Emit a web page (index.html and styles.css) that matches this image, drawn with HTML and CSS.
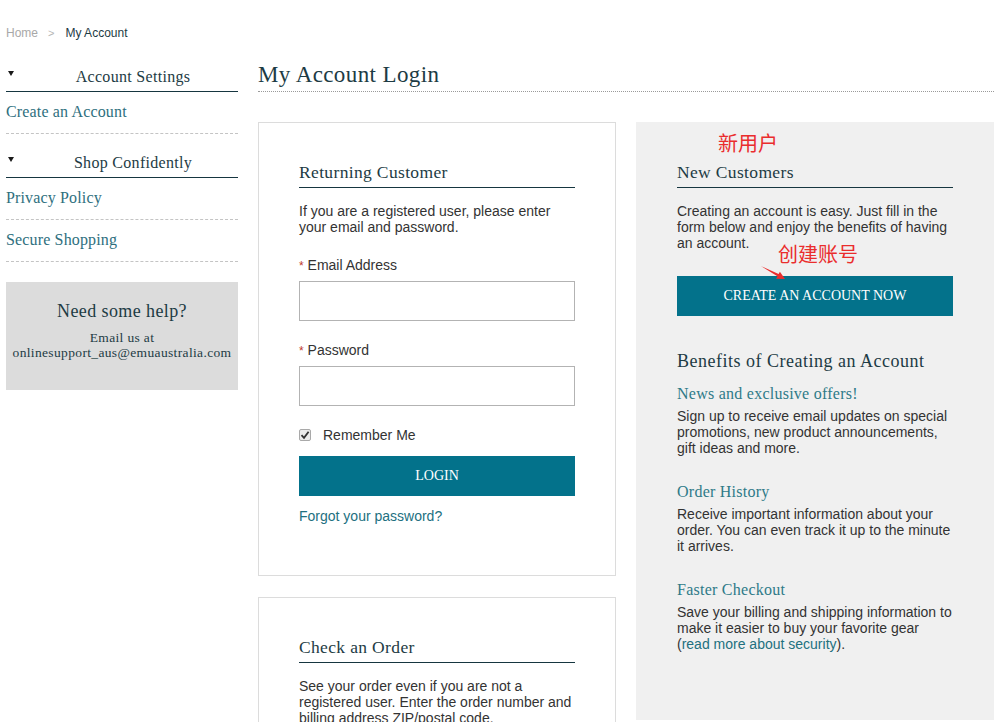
FILE: index.html
```html
<!DOCTYPE html>
<html lang="en">
<head>
<meta charset="utf-8">
<title>My Account Login</title>
<link rel="stylesheet" href="styles.css">
</head>
<body>
<div class="page">
  <nav class="breadcrumb">
    <a class="crumb-home" href="#">Home</a>
    <span class="crumb-sep">&gt;</span>
    <span class="crumb-current">My Account</span>
  </nav>

  <div class="layout">
    <aside class="sidebar">
      <div class="side-head"><span class="tri"></span><span class="side-title">Account Settings</span></div>
      <a class="side-link" href="#">Create an Account</a>
      <div class="side-head second"><span class="tri"></span><span class="side-title">Shop Confidently</span></div>
      <a class="side-link" href="#">Privacy Policy</a>
      <a class="side-link" href="#">Secure Shopping</a>

      <div class="help">
        <div class="help-title">Need some help?</div>
        <div class="help-text">Email us at<br>onlinesupport_aus@emuaustralia.com</div>
      </div>
    </aside>

    <main class="main">
      <h1 class="page-title">My Account Login</h1>

      <div class="columns">
        <div class="left-col">
          <section class="card">
            <h2 class="card-title">Returning Customer</h2>
            <p class="text first">If you are a registered user, please enter your email and password.</p>
            <label class="field-label"><span class="req">*</span> Email Address</label>
            <div class="input"></div>
            <label class="field-label"><span class="req">*</span> Password</label>
            <div class="input"></div>
            <div class="remember">
              <span class="check">
                <svg width="10" height="10" viewBox="0 0 10 10"><path d="M1.5 5.2 L4 7.8 L8.6 1.8" fill="none" stroke="#333" stroke-width="1.8"/></svg>
              </span>
              <span>Remember Me</span>
            </div>
            <div class="btn login">LOGIN</div>
            <a class="forgot" href="#">Forgot your password?</a>
          </section>

          <section class="card order">
            <h2 class="card-title">Check an Order</h2>
            <p class="text first">See your order even if you are not a registered user. Enter the order number and billing address ZIP/postal code.</p>
          </section>
        </div>

        <section class="newbox">
          <span class="note note-new">新用户</span>
          <span class="note note-create">创建账号</span>
          <svg class="note-arrow" width="30" height="20" viewBox="0 0 30 20"><polygon points="3,4 20.6,12.1 21.9,9.7 27,17 18.1,16.7 19.4,14.3" fill="#ea2d2d"/></svg>

          <h2 class="card-title">New Customers</h2>
          <p class="text first">Creating an account is easy. Just fill in the form below and enjoy the benefits of having an account.</p>
          <div class="btn create">CREATE AN ACCOUNT NOW</div>

          <h3 class="benefits">Benefits of Creating an Account</h3>
          <h4 class="benefit-title">News and exclusive offers!</h4>
          <p class="text small-gap">Sign up to receive email updates on special promotions, new product announcements, gift ideas and more.</p>
          <h4 class="benefit-title">Order History</h4>
          <p class="text small-gap">Receive important information about your order. You can even track it up to the minute it arrives.</p>
          <h4 class="benefit-title">Faster Checkout</h4>
          <p class="text small-gap">Save your billing and shipping information to make it easier to buy your favorite gear (<a class="inline-link" href="#">read more about security</a>).</p>
        </section>
      </div>
    </main>
  </div>
</div>
</body>
</html>
```

FILE: styles.css
```css
* { box-sizing: border-box; }
html, body { margin: 0; padding: 0; background: #fff; }
body {
  font-family: "Liberation Sans", Arial, sans-serif;
  color: #333;
  overflow: hidden;
}
a { text-decoration: none; }

.page { padding-left: 6px; width: 994px; }

/* breadcrumb */
.breadcrumb {
  padding-top: 26px;
  font-size: 12px;
  line-height: 14px;
  display: flex;
  align-items: center;
}
.crumb-home { color: #a8a8a8; }
.crumb-sep { color: #b5b5b5; margin: 0 11px 0 10px; font-size: 11px; }
.crumb-current { color: #1d3b44; }

.layout {
  display: flex;
  gap: 20px;
  margin-top: 20px;
}

/* sidebar */
.sidebar { width: 232px; flex: none; display: flex; flex-direction: column; }
.side-head {
  display: flex;
  align-items: center;
  padding: 7px 0 5px;
  border-bottom: 1px solid #163640;
  font-family: "Liberation Serif", "Times New Roman", serif;
  font-size: 16px;
  letter-spacing: 0.3px;
  line-height: 19px;
  color: #1d3b44;
}
.side-head.second { margin-top: 12px; }
.tri {
  width: 22px;
  flex: none;
  height: 5px;
}
.tri::before {
  content: "";
  display: block;
  margin-left: 2px;
  margin-top: -3px;
  width: 0; height: 0;
  border-left: 3.5px solid transparent;
  border-right: 3.5px solid transparent;
  border-top: 5px solid #1a1a1a;
}
.side-title { flex: 1; text-align: center; }
.side-link {
  display: block;
  padding: 10px 0 12px;
  line-height: 19px;
  border-bottom: 1px dashed #c4c4c4;
  font-family: "Liberation Serif", "Times New Roman", serif;
  font-size: 16px;
  letter-spacing: 0.15px;
  color: #2e6f7e;
}

.help {
  margin-top: 20px;
  background: #dcdcdc;
  height: 108px;
  padding-top: 18px;
  text-align: center;
  font-family: "Liberation Serif", "Times New Roman", serif;
  color: #1d3b44;
}
.help-title { font-size: 18px; line-height: 22px; letter-spacing: 0.4px; }
.help-text { margin-top: 8px; font-size: 13.5px; line-height: 15px; letter-spacing: 0.35px; }

/* main */
.main { width: 736px; flex: none; }
.page-title {
  margin: 0;
  padding: 2px 0 3px;
  font-family: "Liberation Serif", "Times New Roman", serif;
  font-weight: normal;
  font-size: 23px;
  letter-spacing: 0.4px;
  line-height: 26px;
  color: #1d3b44;
  border-bottom: 1px dotted #9a9a9a;
}

.columns {
  margin-top: 30px;
  display: grid;
  grid-template-columns: 358px 358px;
  gap: 20px;
  align-items: start;
}
.left-col { display: flex; flex-direction: column; gap: 21px; }

.card {
  border: 1px solid #dcdcdc;
  padding: 39px 40px 51px;
  display: flex;
  flex-direction: column;
}
.card.order { padding-bottom: 40px; }

.card-title {
  margin: 0;
  padding-bottom: 5px;
  border-bottom: 1px solid #163640;
  font-family: "Liberation Serif", "Times New Roman", serif;
  font-weight: normal;
  font-size: 17.5px;
  letter-spacing: 0.35px;
  line-height: 20px;
  color: #1d3b44;
}

.text {
  margin: 0;
  font-size: 14px;
  line-height: 16px;
  color: #333;
}
.text.first { margin-top: 15px; }
.text.small-gap { margin-top: 4px; }

.field-label {
  display: block;
  margin-top: 22px;
  height: 16px;
  font-size: 14px;
  line-height: 16px;
  color: #333;
}
.field-label + .input + .field-label { margin-top: 21px; }
.req { color: #c0392b; font-size: 12px; line-height: 12px; }
.input {
  margin-top: 8px;
  height: 40px;
  border: 1px solid #b3b3b3;
  background: #fff;
}

.remember {
  margin-top: 21px;
  display: flex;
  align-items: center;
  gap: 12px;
  height: 16px;
  font-size: 14px;
  line-height: 16px;
  color: #333;
}
.check {
  width: 12px;
  height: 12px;
  border: 1px solid #a9a9a9;
  border-radius: 2px;
  background: #ececec;
  display: flex;
  align-items: center;
  justify-content: center;
}

.btn {
  height: 40px;
  background: #03728b;
  color: #fff;
  display: flex;
  align-items: center;
  justify-content: center;
  font-family: "Liberation Serif", "Times New Roman", serif;
  font-size: 14px;
}
.btn.login { margin-top: 13px; }
.forgot {
  margin-top: 12px;
  font-size: 14px;
  line-height: 16px;
  color: #22707f;
}

/* new customers */
.newbox {
  position: relative;
  background: #f0f0f0;
  padding: 40px 41px 0;
  height: 598px;
  display: flex;
  flex-direction: column;
}
.btn.create { margin-top: 25px; }
.benefits {
  margin: 34px 0 0;
  font-family: "Liberation Serif", "Times New Roman", serif;
  font-weight: normal;
  font-size: 18px;
  letter-spacing: 0.5px;
  line-height: 22px;
  color: #1d3b44;
}
.benefit-title {
  margin: 26px 0 0;
  font-family: "Liberation Serif", "Times New Roman", serif;
  font-weight: normal;
  font-size: 16px;
  letter-spacing: 0.25px;
  line-height: 20px;
  color: #2e7a88;
}
.benefits + .benefit-title { margin-top: 12px; }
.inline-link { color: #22707f; }

/* red annotations overlayed on the screenshot */
.note {
  position: absolute;
  font-family: "Noto Sans CJK SC", sans-serif;
  font-size: 20px;
  line-height: 28px;
  color: #ea2d2d;
}
.note-new { left: 82px; top: 7px; }
.note-create { left: 142px; top: 118px; }
.note-arrow { position: absolute; left: 122px; top: 140px; }
```
